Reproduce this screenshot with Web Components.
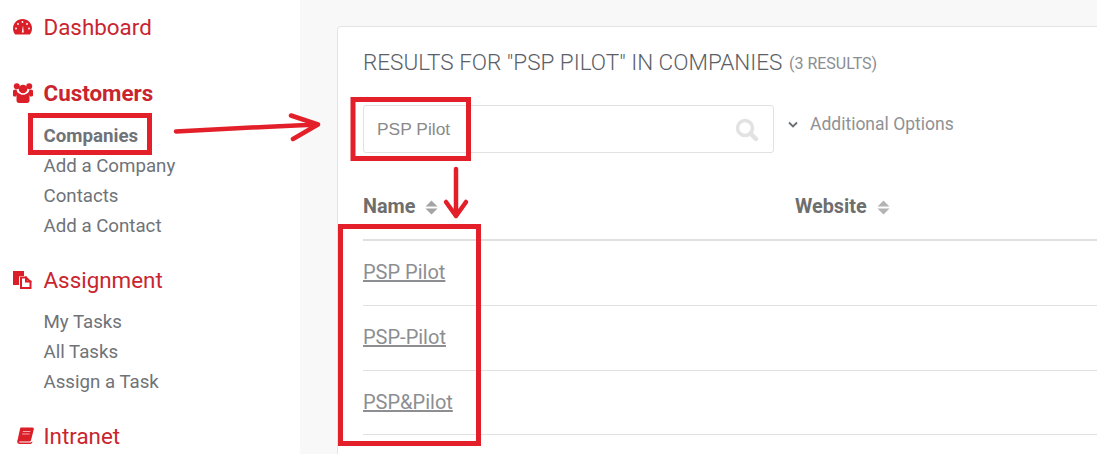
<!DOCTYPE html>
<html lang="en"><head><meta charset="utf-8"><title>Results</title>
<style>
html,body{margin:0;padding:0;height:456px;overflow:hidden;background:#fff;font-family:Roboto,sans-serif}
app-shell{width:1097px;height:454px;background:#f8f8f8}
</style></head><body>
<app-shell>
  <side-nav slot="nav">
    <nav-group label="Dashboard" icon="dash" style="--gap-top:12px"></nav-group>
    <nav-group label="Customers" icon="users" strong style="--gap-top:36px;--list-gap:12px">
      <nav-link current>Companies</nav-link><nav-link>Add a Company</nav-link><nav-link>Contacts</nav-link><nav-link>Add a Contact</nav-link>
    </nav-group>
    <nav-group label="Assignment" icon="files" style="--gap-top:25px;--list-gap:11px">
      <nav-link>My Tasks</nav-link><nav-link>All Tasks</nav-link><nav-link>Assign a Task</nav-link>
    </nav-group>
    <nav-group label="Intranet" icon="book" style="--gap-top:25px"></nav-group>
  </side-nav>
  <result-card slot="main" query="PSP Pilot" count="3 RESULTS">
    <search-bar value="PSP Pilot"></search-bar>
    <result-table>
      <result-row>PSP Pilot</result-row><result-row>PSP-Pilot</result-row><result-row last>PSP&amp;Pilot</result-row>
    </result-table>
  </result-card>
  <annot-layer slot="over"></annot-layer>
</app-shell>
<script>
const R='#db1f29';
const icons={
dash:`<svg width="19" height="16" viewBox="0 0 19 16"><path fill="${R}" d="M9.500 0C4.200 0 0 4.200 0 9.500c0 2.400.8 4.500 2.200 6h14.600c1.400-1.500 2.200-3.600 2.200-6C19 4.200 14.800 0 9.500 0z"/><g fill="#fff"><circle cx="9.500" cy="3" r=".9"/><circle cx="5" cy="5" r=".9"/><circle cx="14" cy="5" r=".9"/><circle cx="3" cy="9.500" r=".9"/><circle cx="16" cy="9.500" r=".9"/><path d="M8.800 13.500L10 6.500l.8 7z"/></g></svg>`,
users:`<svg width="20" height="20" viewBox="0 0 20 20" fill="${R}"><circle cx="3.800" cy="3.300" r="3"/><circle cx="16.200" cy="3.300" r="3"/><circle cx="10" cy="6" r="4.300"/><path d="M0 7.500c1-1 2.200-1.200 3.500-1 .4 1.600 1 3.500 2.500 4-1.500.5-2.500 2-2.800 3H1c-.7 0-1-.5-1-1.200zM20 7.500c-1-1-2.200-1.200-3.500-1-.4 1.600-1 3.500-2.500 4 1.500.5 2.500 2 2.800 3H19c.7 0 1-.5 1-1.200z"/><path d="M5.500 10c1.200 1 2.700 1.800 4.500 1.800s3.300-.8 4.500-1.800c1.500.8 2 2.500 2 4.500v3c0 1.500-1 2.500-2.500 2.500H6c-1.500 0-2.500-1-2.500-2.500v-3c0-2 .5-3.700 2-4.500z"/></svg>`,
files:`<svg width="19" height="18" viewBox="0 0 19 18"><path fill="${R}" d="M0 0h11v5H7.500c-1 0-1.500.5-1.500 1.500V14H0z"/><path fill="#fff" stroke="${R}" stroke-width="2" d="M8 6.500h5l4.500 4.500v6H8z"/><path fill="${R}" d="M12 5.500h2v4h4.500v2H12z"/></svg>`,
book:`<svg width="17" height="17" viewBox="0 0 17 17"><path fill="${R}" d="M4 .5h11.500c1 0 1.500.8 1.300 1.800l-2.800 11c-.2.800-.8 1.200-1.600 1.200H3c-.8 0-1 .5-.6.800.3.200.8.200 1.400.200h9.700c.6 0 1-.2 1.300-.8l.7-.1c-.2 1.400-1 2.400-2.200 2.400H2.800C1.200 17 0 15.800.2 14.200.3 13.500.6 12.800.800 12L3 2C3.200 1 3.500.5 4 .5z"/><path fill="#f7a5a9" d="M6 4h7.500l-.3 1H5.700zM5.300 6.500h7.500l-.3 1H5z"/></svg>`
};
function def(name,html){customElements.define(name,class extends HTMLElement{
  connectedCallback(){ if(this.shadowRoot) return; const r=this.attachShadow({mode:'open'}); r.innerHTML=typeof html==='function'?html(this):html; }
});}
def('app-shell',`<style>:host{display:block;position:relative;overflow:hidden}
.w{display:flex;height:100%}.n{width:300px;flex:none;background:#fff}.m{flex:1;min-width:0;padding:26px 0 0 37px;box-sizing:border-box}</style>
<div class="w"><div class="n"><slot name="nav"></slot></div><div class="m"><slot name="main"></slot></div></div><slot name="over"></slot>`);
def('side-nav',`<style>:host{display:block;padding-left:13px}</style><slot></slot>`);
def('nav-group',el=>`<style>:host{display:block;padding-top:var(--gap-top,0)}
.h{display:flex;align-items:center;height:29px;margin-bottom:1px;color:#c9252f;font-size:22.400px;${el.hasAttribute('strong')?'font-weight:700;':'font-weight:400;'}}
.i{width:30.500px;flex:none;display:flex;align-items:center;${el.getAttribute('icon')==='book'?'padding-left:4px;width:26.500px;':''}}
.l{display:block;padding-top:var(--list-gap,0)}</style>
<div class="h"><span class="i">${icons[el.getAttribute('icon')]}</span><span>${el.getAttribute('label')}</span></div>
<div class="l"><slot></slot></div>`);
def('nav-link',el=>`<style>:host{display:block;padding-left:30.500px;height:30px;line-height:32px;font-size:18.700px;color:#6f7378;${el.hasAttribute('current')?'font-weight:700;':''}}</style><slot></slot>`);
def('result-card',el=>`<style>:host{display:block;background:#fff;border:1px solid #e4e4e4;border-right:0;border-radius:4px 0 0 0;height:500px;padding:0 0 0 25px;box-sizing:border-box}
h2{margin:0;padding-top:19px;height:78px;box-sizing:border-box;font-weight:300;font-size:22.500px;line-height:33px;color:#5b6066}
small{font-size:16px;font-weight:400;color:#8b8d90;margin-left:1px;position:relative;top:-1.500px}</style>
<h2>RESULTS FOR "${el.getAttribute('query').toUpperCase()}" IN COMPANIES <small>(${el.getAttribute('count')})</small></h2><slot></slot>`);
def('search-bar',el=>`<style>:host{display:flex;align-items:flex-start}
.b{width:411px;height:48px;box-sizing:border-box;border:1px solid #e1e1e1;border-radius:3px;display:flex;align-items:center;justify-content:space-between;padding:1px 15px 0 13px;font-family:"Liberation Sans",sans-serif;font-size:17.400px;color:#8a8a8a;background:#fff}
.o{display:flex;align-items:center;height:38px;margin-left:14px;color:#8f9194;font-size:17.500px;gap:12px}</style>
<div class="b"><span>${el.getAttribute('value')}</span><svg width="23" height="23" viewBox="0 0 23 23"><circle cx="10" cy="10" r="7.500" fill="none" stroke="#e2e2e2" stroke-width="3.500"/><path d="M15.500 15.500l5.500 5.500" stroke="#e2e2e2" stroke-width="4.500" stroke-linecap="round"/></svg></div>
<div class="o"><svg width="10" height="7" viewBox="0 0 10 7"><path d="M1 1.500l4 4 4-4" fill="none" stroke="#6b6f73" stroke-width="1.800"/></svg><span>Additional Options</span></div>`);
const sort=c=>`<svg width="13" height="15" viewBox="0 0 13 15"><path fill="${c}" d="M6.500 .5l6 6H.5zM.5 8.500h12l-6 6z"/></svg>`;
def('result-table',`<style>:host{display:block;margin-top:33px}
.h{display:flex;height:55px;align-items:center;border-bottom:2px solid #e0e0e0;box-sizing:border-box}
.c{display:flex;align-items:center;gap:10px;font-weight:700;font-size:19.800px;color:#6e6e6e;width:432px;flex:none;margin-top:-13px}
.c svg{margin-top:2px}</style>
<div class="h" part="head"><div class="c">Name ${sort('#a4a4a4')}</div><div class="c">Website ${sort('#b4b4b4')}</div></div><slot></slot>`);
def('result-row',el=>`<style>:host{display:flex;align-items:center;height:${el.hasAttribute('last')?64:65}px;box-sizing:border-box;padding-bottom:2px;border-bottom:1px solid #e2e2e2;font-size:20px;color:#8c8e91}</style><span style="text-decoration:underline"><slot></slot></span>`);
def('annot-layer',`<style>:host{position:absolute;inset:0;pointer-events:none;display:block}svg{display:block}</style>
<svg width="1098" height="456" viewBox="0 0 1098 456" fill="none" stroke="#e3202a">
<rect x="30.500" y="115.500" width="119" height="37" stroke-width="5"/>
<rect x="353" y="99.500" width="115.500" height="59" stroke-width="5"/>
<rect x="340.500" y="226.500" width="138" height="217" stroke-width="5"/>
<path d="M176 131.500C220 129 270 126.500 317 124.500M291 115.500L318 124.500L293 139" stroke-width="4.500" stroke-linecap="round" stroke-linejoin="round"/>
<path d="M456 169L456 216M446 202L456 216L466 202" stroke-width="4.500" stroke-linecap="round" stroke-linejoin="round"/>
</svg>`);
</script>
</body></html>
